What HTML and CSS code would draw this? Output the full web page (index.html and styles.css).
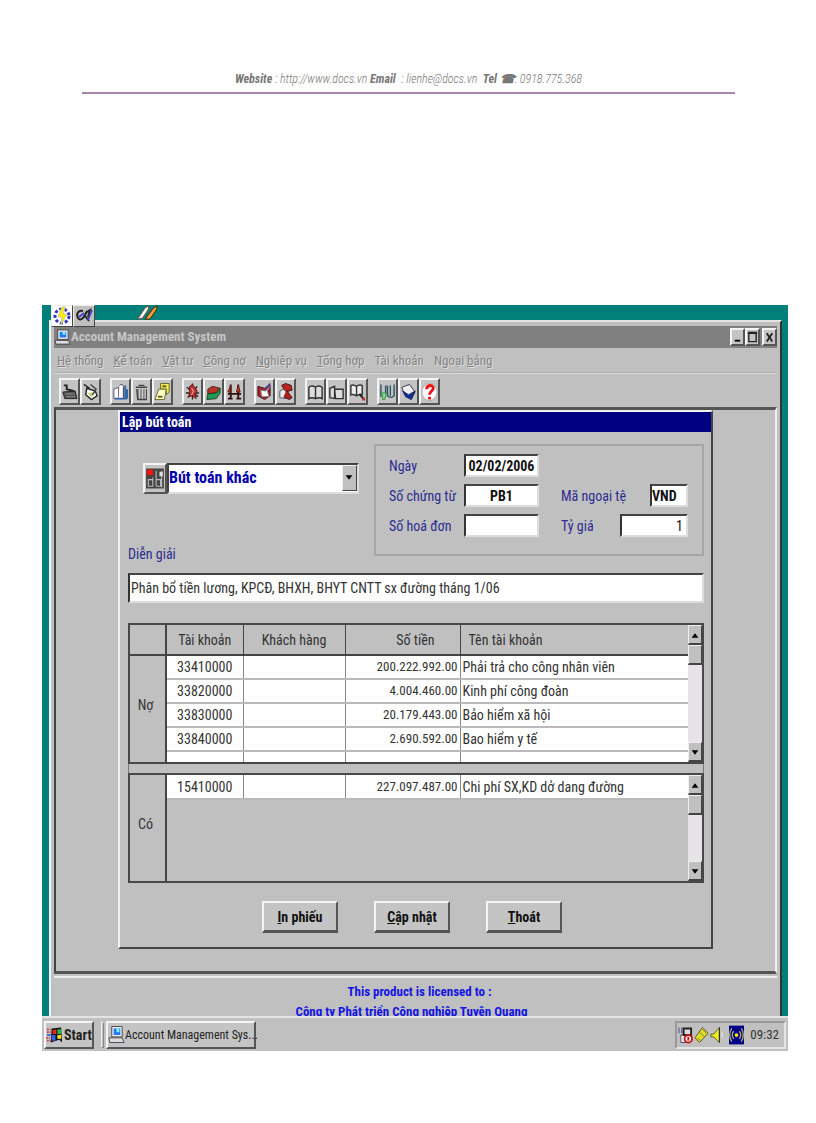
FILE: index.html
```html
<!DOCTYPE html>
<html lang="vi">
<head>
<meta charset="utf-8">
<title>Account Management System</title>
<link rel="stylesheet" href="styles.css">
</head>
<body>
<header class="page-head"><b>Website</b> : http://www.docs.vn <b>Email</b> &nbsp;: lienhe@docs.vn &nbsp;<b>Tel ☎</b>: 0918.775.368</header>
<main class="desktop">
  <div class="shortcuts">
    <span class="shortcut lit"><svg viewBox="0 0 20 20"><circle cx="10" cy="10" r="7" fill="none" stroke="#33c" stroke-width="3" stroke-dasharray="3 2"/><path d="M10 1L6 11h4l-1 8 6-11h-4l2-7z" fill="#fe0" stroke="#cc8"/></svg></span>
    <span class="shortcut"><svg viewBox="0 0 20 20"><path d="M9 5C4 4 2 8 4 12c2 3 5 1 7-3l2-4m-2 5 4 5M13 6l3-2-2 7" fill="none" stroke="#222" stroke-width="2"/><path d="M5 11l5-4m4 7 4-10" stroke="#44c" stroke-width="2"/></svg></span>
    <svg class="pencils" viewBox="0 0 24 16"><path d="M1 15L9 3l4-2-1 4-6 9z" fill="#fff" stroke="#843"/><path d="M9 15l9-12 4-2-1 4-7 10z" fill="#f93" stroke="#420"/></svg>
  </div>
  <section class="window">
    <div class="titlebar">
      <svg class="pc" viewBox="0 0 18 18"><path d="M4 1h11v10H4z" fill="#eee" stroke="#444"/><path d="M6 3h7v6H6z" fill="#27f"/><path d="M9 3h3v3H9z" fill="#7ff"/><path d="M1 12h14l2 4H2z" fill="#ddd" stroke="#445"/></svg>
      <h1>Account Management System</h1>
      <div class="win-buttons">
        <button aria-label="Minimize"><svg viewBox="0 0 12 14"><path d="M3 11h6" stroke="#000" stroke-width="2"/></svg></button>
        <button aria-label="Maximize"><svg viewBox="0 0 12 14"><path d="M2 2.500h8V12H2z" fill="none" stroke="#222" stroke-width="1.500"/><path d="M1 2.500h10" stroke="#222" stroke-width="2.500"/></svg></button>
        <button class="close" aria-label="Close"><svg viewBox="0 0 12 14"><path d="M3 3l6 9M9 3l-6 9" stroke="#222" stroke-width="2"/></svg></button>
      </div>
    </div>
    <nav class="menu">
      <a href="#"><u>H</u>ệ thống</a><a href="#"><u>K</u>ế toán</a><a href="#"><u>V</u>ật tư</a><a href="#"><u>C</u>ông nợ</a><a href="#"><u>N</u>ghiệp vụ</a><a href="#"><u>T</u>ổng hợp</a><a href="#">Tài khoản</a><a href="#">Ngoại <u>b</u>ảng</a>
    </nav>
    <div class="toolbar">
      <div class="tools">
        <button aria-label="Nhập liệu"><svg viewBox="0 0 18 22"><path d="M3 4h3v4l8 2" fill="none" stroke="#222" stroke-width="2"/><path d="M2 11l13-1 2 8H4z" fill="#555" stroke="#222"/><path d="M5 13h9M6 16h9" stroke="#bbb" stroke-dasharray="1 1"/></svg></button>
        <button aria-label="Sửa"><svg viewBox="0 0 18 22"><path d="M2 3l6 4M5 7l9 3 2 5-6 4-6-5z" fill="#fff" stroke="#222" stroke-width="1.500"/><path d="M6 12l8-1-4 6z" fill="#cc7"/><path d="M9 3l6 5-4 6" fill="none" stroke="#444" stroke-width="1.500"/></svg></button>
      </div>
      <div class="tools">
        <button aria-label="Sổ mới"><svg viewBox="0 0 18 22"><path d="M2 8l5-2v12H2z" fill="#fff" stroke="#557"/><path d="M8 4c2-2 5 0 4 2v12H7" fill="#fff" stroke="#333"/><path d="M14 4v14m2-10v10M3 18h13" stroke="#36a" stroke-width="2"/></svg></button>
        <button aria-label="Xoá"><svg viewBox="0 0 18 22"><path d="M3 6h12M6 4h6M4 8l1 11h9V8" fill="#888" stroke="#444" stroke-width="1.500"/><path d="M7 8v10m3-10v10m3-10v10" stroke="#ddd"/></svg></button>
        <button aria-label="Ghi chú"><svg viewBox="0 0 18 22"><path d="M7 2h9v9l-3 3V8H7z" fill="#ee4" stroke="#663"/><path d="M5 8h8l-2 11H1z" fill="#ffb" stroke="#663"/><path d="M4 16h5" stroke="#653" stroke-width="2"/><path d="M9 5h4" stroke="#653" stroke-width="2"/></svg></button>
      </div>
      <div class="tools">
        <button aria-label="Vật tư"><svg viewBox="0 0 18 22"><path d="M9 2v17M3 6l12 10M14 5L4 17M2 12h14" stroke="#222" stroke-width="1.500"/><path d="M6 5l3-2 3 4 2 3-2 3 1 5-4-3-4 1 1-5z" fill="#b33" stroke="#611"/><path d="M8 7l2 3-2 4" fill="none" stroke="#ecc"/></svg></button>
        <button aria-label="Hàng hoá"><svg viewBox="0 0 18 22"><path d="M3 8l5-3 8 2-4 5-9 1z" fill="#b32" stroke="#422"/><path d="M3 13l9-1 4-5v5l-4 6-10 1z" fill="#295" stroke="#142"/></svg></button>
        <button aria-label="Cân đối"><svg viewBox="0 0 18 22"><path d="M5 3v15M13 3v15M2 13h14M2 18h5m4 0h5" stroke="#311" stroke-width="2"/><path d="M5 4L2 11h3zM13 4l-2 7h4z" fill="#b42" stroke="#611"/></svg></button>
      </div>
      <div class="tools">
        <button aria-label="Lập phiếu"><svg viewBox="0 0 18 22"><path d="M2 5l7 2 6-3v11l-6 4-7-4z" fill="#a22" stroke="#412"/><path d="M5 9l5 1 5-5-3 5 2 6H6z" fill="#fff" stroke="#777"/><path d="M9 9l6-7" stroke="#548" stroke-width="2"/></svg></button>
        <button aria-label="In"><svg viewBox="0 0 18 22"><path d="M5 4l4-2 6 2 1 5-7 2z" fill="#b22" stroke="#411"/><path d="M3 10l4-2 5 5-2 5-7-1z" fill="#eee" stroke="#555"/><path d="M10 9l6 8-3 2-6-3" fill="#a22" stroke="#411"/></svg></button>
      </div>
      <div class="tools">
        <button aria-label="Sổ cái"><svg viewBox="0 0 18 22"><path d="M9 6C6 4 4 4 2 6v12c3-2 5-1 7 0 2-1 4-2 7 0V6c-3-2-5-2-7 0zM9 6v12" fill="#ddd" stroke="#333" stroke-width="1.500"/></svg></button>
        <button aria-label="Báo cáo"><svg viewBox="0 0 18 22"><path d="M7 8V5L2 7v10l6 1M7 8h9v10H8zM7 8v10" fill="#ddd" stroke="#333" stroke-width="1.500"/></svg></button>
        <button aria-label="Tra cứu"><svg viewBox="0 0 18 22"><path d="M8 5C5 3 4 3 2 4v10c2-1 4 0 6 1 2-1 3-2 6-1V4c-3-1-4-1-6 1zM8 5v10" fill="#eee" stroke="#333" stroke-width="1.500"/><path d="M11 13l5 6" stroke="#222" stroke-width="2"/><path d="M14 17h3v3h-3z" fill="#b33"/></svg></button>
      </div>
      <div class="tools">
        <button aria-label="Tổng hợp"><svg viewBox="0 0 18 22"><path d="M2 3v13M7 4v8M9 4v11c2 2 5 2 7 0V3M12 4v11" fill="none" stroke="#356" stroke-width="1.500"/><path d="M3 12h5l-2 7H4z" fill="#8d8" stroke="#384"/></svg></button>
        <button aria-label="Lưu"><svg viewBox="0 0 18 22"><path d="M2 6l8-3 6 8-4 7-8-6z" fill="#eee" stroke="#333"/><path d="M3 10l6 4 7-4-4 9-6-3z" fill="#138" stroke="#126"/></svg></button>
        <button aria-label="Trợ giúp"><svg viewBox="0 0 18 22"><ellipse cx="9" cy="11" rx="8" ry="9" fill="#fff" stroke="#aaa"/><path d="M6 8c0-5 7-5 7-1 0 3-4 3-4 7m0 2v3" fill="none" stroke="#e11" stroke-width="3"/></svg></button>
      </div>
    </div>
    <div class="client">
      <form class="dialog" onsubmit="return false">
        <h2>Lập bút toán</h2>
        <div class="dialog-body">
          <div class="top">
            <div class="kind">
              <button type="button" class="kind-btn" aria-label="Chọn loại"><svg viewBox="0 0 18 22"><path d="M1 2h16v18H1z" fill="#444"/><path d="M2 3h5v5H2z" fill="#f11"/><path d="M3 12h4v6H3zm4-2v8m3-14v14m0-6h4v6h-4m5-14v15" fill="none" stroke="#bbb"/><path d="M13 5h3v4h-3z" fill="#ddd"/></svg></button>
              <div class="select-box">
                <select aria-label="Loại bút toán"><option>Bút toán khác</option></select>
                <span class="drop"><svg viewBox="0 0 10 8"><path d="M2 2h6L5 6z"/></svg></span>
              </div>
            </div>
            <div class="group">
              <label for="ngay">Ngày</label><input id="ngay" class="mid" value="02/02/2006"><span></span><span></span>
              <label for="sct">Số chứng từ</label><input id="sct" class="mid" value="PB1"><label for="mnt">Mã ngoại tệ</label><input id="mnt" class="code" value="VND">
              <label for="shd">Số hoá đơn</label><input id="shd" class="mid"><label for="tg">Tỷ giá</label><input id="tg" class="rate" value="1">
            </div>
          </div>
          <label class="note-label" for="dg">Diễn giải</label>
          <input id="dg" class="note" value="Phân bổ tiền lương, KPCĐ, BHXH, BHYT CNTT sx đường tháng 1/06">
          <div class="sheet">
            <table>
              <colgroup><col class="c-side"><col class="c-acc"><col class="c-cust"><col class="c-sum"><col></colgroup>
              <thead><tr><th></th><th>Tài khoản</th><th>Khách hàng</th><th class="num">Số tiền</th><th class="name">Tên tài khoản</th></tr></thead>
              <tbody>
                <tr><th rowspan="5" scope="rowgroup">Nợ</th><td>33410000</td><td></td><td>200.222.992.00</td><td>Phải trả cho công nhân viên</td></tr>
                <tr><td>33820000</td><td></td><td>4.004.460.00</td><td>Kinh phí công đoàn</td></tr>
                <tr><td>33830000</td><td></td><td>20.179.443.00</td><td>Bảo hiểm xã hội</td></tr>
                <tr><td>33840000</td><td></td><td>2.690.592.00</td><td>Bao hiểm y tế</td></tr>
                <tr class="blank"><td></td><td></td><td></td><td></td></tr>
              </tbody>
            </table>
            <div class="scroll"><span class="arrow"><svg viewBox="0 0 10 8"><path d="M2 6h6L5 2z"/></svg></span><span class="thumb"></span><span class="arrow down"><svg viewBox="0 0 10 8"><path d="M2 2h6L5 6z"/></svg></span></div>
          </div>
          <div class="splitter"></div>
          <div class="sheet">
            <table>
              <colgroup><col class="c-side"><col class="c-acc"><col class="c-cust"><col class="c-sum"><col></colgroup>
              <tbody>
                <tr><th rowspan="2" scope="rowgroup">Có</th><td>15410000</td><td></td><td>227.097.487.00</td><td>Chi phí SX,KD dở dang đường</td></tr>
                <tr class="rest"><td colspan="4"></td></tr>
              </tbody>
            </table>
            <div class="scroll"><span class="arrow"><svg viewBox="0 0 10 8"><path d="M2 6h6L5 2z"/></svg></span><span class="thumb"></span><span class="arrow down"><svg viewBox="0 0 10 8"><path d="M2 2h6L5 6z"/></svg></span></div>
          </div>
          <div class="actions">
            <button><u>I</u>n phiếu</button><button><u>C</u>ập nhật</button><button><u>T</u>hoát</button>
          </div>
        </div>
      </form>
    </div>
    <footer class="license"><p>This product is licensed to :</p><p>Công ty Phát triển Công nghiệp Tuyên Quang</p></footer>
  </section>
  <div class="taskbar">
    <button class="start"><svg viewBox="0 0 18 20"><path d="M6 3l10-1 1 16-3-3-9 3z" fill="#111"/><path d="M7 5l4-1v5H7z" fill="#e22"/><path d="M12 4h4v5h-4z" fill="#2b4"/><path d="M6 10h4v6H6z" fill="#36e"/><path d="M12 10h4v4h-4z" fill="#fd2"/><path d="M1 4h4M1 7h4M0 13h4M1 16h4" stroke="#c44" stroke-width="2" stroke-dasharray="2 1"/><path d="M1 10h4" stroke="#46d" stroke-width="2"/></svg><b>Start</b></button>
    <span class="sep"></span>
    <button class="task"><svg viewBox="0 0 18 20"><path d="M4 1h11v11H4z" fill="#eee" stroke="#444"/><path d="M6 3h7v7H6z" fill="#27f"/><path d="M9 3h3v4H9z" fill="#7ff"/><path d="M1 13h14l2 5H2z" fill="#ddd" stroke="#445"/></svg>Account Management Sys...</button>
    <div class="tray">
      <svg viewBox="0 0 16 20"><path d="M1 2v6m3-6v6M3 10h8v8H3z" fill="#eee" stroke="#447"/><path d="M6 3h8v7H6z" fill="#ddd" stroke="#222" stroke-width="2"/><circle cx="11" cy="14" r="4" fill="#fff" stroke="#c11" stroke-width="2"/><path d="M11 12v4" stroke="#c11" stroke-width="2"/></svg>
      <svg viewBox="0 0 16 20"><path d="M1 13L9 2l6 6-9 10z" fill="#dd2" stroke="#553"/><path d="M6 7l5 5M4 13l3 3M9 4l4 4" stroke="#774"/></svg>
      <svg viewBox="0 0 16 20"><path d="M1 9h3l6-7v16l-6-6H1z" fill="#ee2" stroke="#553"/><path d="M10 2v16" stroke="#222"/><path d="M13 7v6" stroke="#eee"/></svg>
      <svg viewBox="0 0 16 20"><path d="M0 0h16v20H0z" fill="#008"/><circle cx="8" cy="10" r="2" fill="#fe0"/><path d="M5 6c-2 2-2 6 0 8m6-8c2 2 2 6 0 8M3 3c-3 4-3 10 0 14M13 3c3 4 3 10 0 14" fill="none" stroke="#aa6" stroke-width="1.500"/></svg>
      <time>09:32</time>
    </div>
  </div>
</main>
</body>
</html>
```
FILE: styles.css
```css
* { box-sizing: border-box; }
body {
  margin: 0;
  padding: 70px 28px 72px 42px;
  background: #fff;
  color: #222;
  font: 14px/18px "Roboto Condensed", "Liberation Sans", sans-serif;
}
h1, h2, p { margin: 0; }
button, input, select { font: inherit; color: inherit; border-radius: 0; }
button { background: #c4c4c4; border: 2px solid; border-color: #f4f4f4 #555 #555 #f4f4f4; padding: 0; }
svg { display: block; }

.page-head {
  margin: 0 53px 211px 40px;
  padding-bottom: 4px;
  border-bottom: 2px solid #a685a6;
  text-align: center;
  font-style: italic;
  font-weight: 300;
  font-size: 12px;
  line-height: 18px;
  color: #777;
}
.page-head b { font-weight: bold; }

.desktop { background: #008078; position: relative; }
.shortcuts { display: flex; height: 15px; padding-left: 9px; }
.shortcut { position: relative; z-index: 1; width: 22px; height: 22px; background: #c0c0c0; border: 1px solid; border-color: #eee #444 #444 #eee; }
.shortcut.lit { background: #fff; }
.pencils { width: 24px; height: 15px; margin-left: 41px; }

.window {
  margin: 0 6px 0 7px;
  padding: 4px 3px 0;
  background: #c0c0c0;
  border: 2px solid;
  border-color: #e4e4e4 #333 #c0c0c0 #f4f4f4;
  border-bottom: 0;
}
.titlebar { display: flex; align-items: center; height: 22px; background: #808080; }
.pc { width: 17px; height: 17px; }
.titlebar h1 { flex: 1; font-size: 13px; line-height: 20px; color: #c6c6c6; }
.win-buttons { display: flex; }
.win-buttons button { width: 15px; height: 18px; }
.win-buttons .close { margin-left: 2px; }
.win-buttons svg { width: 100%; height: 14px; }
.menu { display: flex; gap: 10px; height: 25px; padding: 4px 3px; border-bottom: 1px solid #aaa; font-size: 13px; }
.menu a { color: #858585; text-decoration: none; text-shadow: 1px 1px #ddd; white-space: nowrap; }
.toolbar { display: flex; gap: 9px; padding: 4px 5px 2px; border-top: 1px solid #ddd; }
.tools { display: flex; }
.tools button { width: 21px; height: 27px; }
.tools svg { width: 17px; height: 22px; }

.client { border: 3px solid; border-color: #555 #f0f0f0 #555 #444; border-left-width: 2px; border-right-width: 2px; padding: 0 62px 22px 62px; }
.dialog { background: #c0c0c0; border: 2px solid; border-color: #f0f0f0 #444 #444 #f0f0f0; }
.dialog h2 { background: #000080; color: #fff; font-size: 14px; line-height: 20px; padding-left: 2px; }
.dialog-body { padding: 12px 7px 14px 8px; }
.top { display: flex; justify-content: space-between; align-items: flex-start; }
.kind { display: flex; padding: 19px 0 0 15px; width: 231px; }
.kind-btn { width: 24px; height: 31px; }
.kind-btn svg { width: 20px; height: 25px; }
.select-box { position: relative; flex: 1; border: 2px solid; border-color: #444 #ddd #ddd #444; height: 31px; background: #fff; }
.select-box select { width: 100%; height: 26px; border: 0; appearance: none; background: #fff; color: #0000b0; font-weight: bold; font-size: 16px; padding: 0; }
.drop { position: absolute; right: 0; top: 0; width: 15px; height: 26px; background: #c0c0c0; border: 1px solid; border-color: #eee #444 #444 #eee; padding-top: 7px; pointer-events: none; }
.group { display: grid; grid-template-columns: 75px 97px 66px 61px; align-items: center; align-content: start; row-gap: 7px; width: 330px; height: 112px; padding: 8px 13px; border: 2px solid #a4a8a4; }
.group label { color: #2c2c90; font-size: 14px; line-height: 20px; white-space: nowrap; }
.group input, .note { min-width: 0; border: 2px solid; border-color: #444 #ddd #ddd #333; background: #fff; padding: 0; height: 23px; font-weight: bold; color: #111; }
.group .mid { width: 75px; text-align: center; }
.group .code { width: 38px; justify-self: end; }
.group .rate { width: 68px; justify-self: end; text-align: right; font-weight: normal; padding-right: 3px; }
.note-label { display: block; margin: -12px 0 9px; color: #2c2c90; font-size: 14px; line-height: 20px; }
.note { display: block; width: 100%; height: 30px; font-size: 14px; font-weight: normal; color: #333; padding-left: 1px; }

.sheet { display: flex; border: 2px solid #484848; }
.note + .sheet { margin-top: 20px; }
.splitter { height: 9px; border: solid #777; border-width: 0 1px; }
table { flex: 1; border-collapse: collapse; table-layout: fixed; width: 100%; font-size: 14px; }
.c-side { width: 36px; } .c-acc { width: 77px; } .c-cust { width: 102px; } .c-sum { width: 115px; }
th, td { padding: 0; height: 24px; line-height: 20px; white-space: nowrap; }
th { font-weight: normal; border-right: 2px solid #444; color: #333; font-size: 14px; }
tbody th { padding-right: 4px; }
tbody th[rowspan="5"], tbody th[rowspan="2"] { padding-bottom: 8px; }
thead th { height: 30px; border-bottom: 2px solid #444; border-right-width: 1px; }
thead th:first-child { border-right-width: 2px; }
thead .num { text-align: right; padding-right: 25px; }
thead .name { text-align: left; padding-left: 8px; }
thead th:last-child { border-right: 0; }
td { background: #fff; border-bottom: 2px solid #bdb8bd; border-right: 1px solid #888; color: #333; }
td:last-child { border-right: 0; padding-left: 2px; }
td:nth-last-child(4) { text-align: center; }
td:nth-last-child(2) { text-align: right; padding-right: 2px; font-size: 13px; }
.blank td { height: 11px; border-bottom: 0; }
.rest td { height: 82px; background: #c0c0c0; border: 0; }
.scroll { display: flex; flex-direction: column; width: 14px; background: #e6e4e6; }
.arrow, .thumb { height: 20px; background: #c0c0c0; border: 1px solid; border-color: #eee #444 #444 #eee; border-bottom-width: 2px; }
.arrow { padding-top: 5px; }
.down { margin-top: auto; }
.arrow svg, .drop svg { width: 12px; height: 9px; }

.actions { display: flex; justify-content: center; gap: 36px; margin: 18px 8px 0 0; }
.actions button { width: 76px; height: 32px; font-size: 14px; font-weight: bold; color: #111; border-bottom-width: 3px; }

.license { height: 40px; overflow: hidden; margin-top: 2px; padding: 4px 0 0 8px; border-top: 2px solid #ececec; text-align: center; color: #1414e0; font-weight: bold; font-size: 13px; line-height: 20px; }
.license p + p { padding-right: 16px; }

.taskbar { display: flex; align-items: center; height: 35px; padding: 3px 2px 2px; background: #c0c0c0; border-top: 2px solid #e4e4e4; }
.taskbar button { display: flex; align-items: center; height: 28px; white-space: nowrap; }
.taskbar .start { width: 50px; font-size: 14px; gap: 1px; }
.start svg, .task svg { width: 17px; height: 20px; flex: none; }
.sep { width: 3px; height: 26px; margin: 0 2px 0 7px; border: 1px solid; border-color: #eee #888 #888 #eee; }
.taskbar .task { width: 150px; font-size: 12px; }
.tray { display: flex; align-items: center; gap: 1px; margin-left: auto; height: 28px; padding: 0 5px 0 1px; border: 2px solid; border-color: #999 #e4e4e4 #e4e4e4 #999; font-size: 13px; color: #333; }
.tray svg { width: 15px; height: 20px; }
.tray svg:nth-child(4) { margin-left: 3px; }
.tray time { margin-left: 5px; }
```
